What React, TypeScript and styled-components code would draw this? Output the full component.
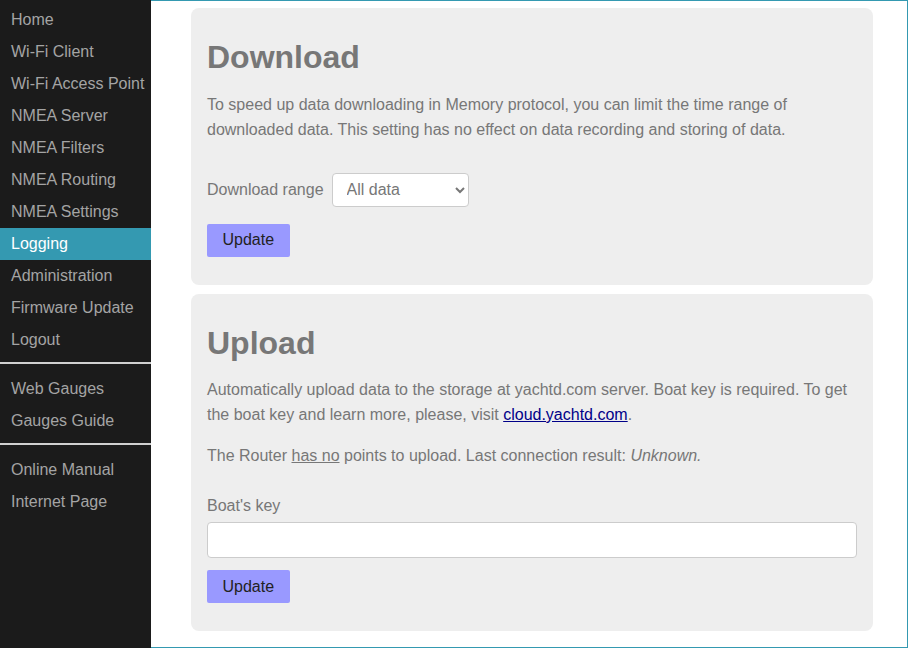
import React, { useState } from 'react'
import styled, { createGlobalStyle } from 'styled-components'

const GlobalStyles = createGlobalStyle`
  html, body {
    margin: 0;
    padding: 0;
    height: 100%;
    background: #fff;
  }
  #root {
    height: 648px;
  }
  * {
    box-sizing: border-box;
  }
`

const menuTop = [
  'Home',
  'Wi-Fi Client',
  'Wi-Fi Access Point',
  'NMEA Server',
  'NMEA Filters',
  'NMEA Routing',
  'NMEA Settings',
  'Logging',
  'Administration',
  'Firmware Update',
  'Logout',
]
const menuGauges = ['Web Gauges', 'Gauges Guide']
const menuLinks = ['Online Manual', 'Internet Page']

export default function App(): JSX.Element {
  const [range, setRange] = useState('all')
  const [boatKey, setBoatKey] = useState('')

  return (
    <>
      <GlobalStyles />
      <Page>
        <Sidebar>
          {menuTop.map((item) => (
            <MenuItem key={item} $active={item === 'Logging'}>
              {item}
            </MenuItem>
          ))}
          <Divider />
          {menuGauges.map((item) => (
            <MenuItem key={item}>{item}</MenuItem>
          ))}
          <Divider />
          {menuLinks.map((item) => (
            <MenuItem key={item}>{item}</MenuItem>
          ))}
        </Sidebar>
        <Main>
          <Panel>
            <Title>Download</Title>
            <Text>
              To speed up data downloading in Memory protocol, you can limit the time range of
              downloaded data. This setting has no effect on data recording and storing of data.
            </Text>
            <InlineField>
              <FieldLabel>Download range</FieldLabel>
              <Select value={range} onChange={(e) => setRange(e.target.value)}>
                <option value="all">All data</option>
                <option value="day">Last day</option>
                <option value="week">Last week</option>
                <option value="month">Last month</option>
              </Select>
            </InlineField>
            <UpdateButton>Update</UpdateButton>
          </Panel>
          <Panel>
            <Title>Upload</Title>
            <Text>
              Automatically upload data to the storage at yachtd.com server. Boat key is required. To
              get the boat key and learn more, please, visit <Link href="#">cloud.yachtd.com</Link>.
            </Text>
            <Text>
              The Router <u>has no</u> points to upload. Last connection result: <i>Unknown.</i>
            </Text>
            <StackField>
              <FieldLabel>Boat's key</FieldLabel>
              <KeyInput value={boatKey} onChange={(e) => setBoatKey(e.target.value)} />
            </StackField>
            <UpdateButton>Update</UpdateButton>
          </Panel>
        </Main>
      </Page>
    </>
  )
}

const Page = styled.div`
  display: flex;
  height: 100%;
  font-family: 'Liberation Sans', Arial, sans-serif;
  font-size: 16px;
`

const Sidebar = styled.nav`
  width: 151px;
  flex-shrink: 0;
  background: #1b1b1b;
  padding-top: 4px;
`

const MenuItem = styled.div<{ $active?: boolean }>`
  height: 32px;
  line-height: 32px;
  padding: 0 11px;
  white-space: nowrap;
  color: ${({ $active }) => ($active ? '#ffffff' : '#a4a4a4')};
  background: ${({ $active }) => ($active ? '#3499b1' : 'transparent')};
`

const Divider = styled.hr`
  margin: 6px 0 9px;
  border: none;
  border-top: 2px solid #d0d0d0;
`

const Main = styled.main`
  flex: 1;
  border: 1px solid #3499b1;
  border-left: none;
  padding: 7px 34px 0 40px;
  display: flex;
  flex-direction: column;
  gap: 9px;
  color: #777;
`

const Panel = styled.section`
  background: #eeeeee;
  border-radius: 8px;
  padding: 31px 16px 28px;
`

const Title = styled.h1`
  margin: 0 0 15.5px;
  font-size: 32px;
  line-height: 37px;
  font-weight: bold;
  color: #777;
`

const Text = styled.p`
  margin: 0 0 16px;
  line-height: 25px;
`

const Link = styled.a`
  color: #000088;
  text-decoration: underline;
`

const InlineField = styled.div`
  display: flex;
  align-items: center;
  gap: 8px;
  margin: 31px 0 17px;
`

const StackField = styled.div`
  display: flex;
  flex-direction: column;
  gap: 7px;
  margin: 29px 0 12px;
`

const FieldLabel = styled.label`
  line-height: 18px;
  color: #777;
`

const Select = styled.select`
  width: 137px;
  height: 34px;
  padding: 0 8px 0 10px;
  font-family: inherit;
  font-size: 16px;
  color: #777;
  background: #fff;
  border: 1px solid #ccc;
  border-radius: 4px;
`

const KeyInput = styled.input`
  width: 100%;
  height: 36px;
  padding: 0 10px;
  font-family: inherit;
  font-size: 16px;
  color: #555;
  background: #fff;
  border: 1px solid #ccc;
  border-radius: 4px;
  outline: none;
`

const UpdateButton = styled.button`
  display: block;
  height: 33px;
  padding: 0 15.5px;
  font-family: inherit;
  font-size: 16px;
  color: #222;
  background: #9999ff;
  border: none;
  border-radius: 2px;
`
